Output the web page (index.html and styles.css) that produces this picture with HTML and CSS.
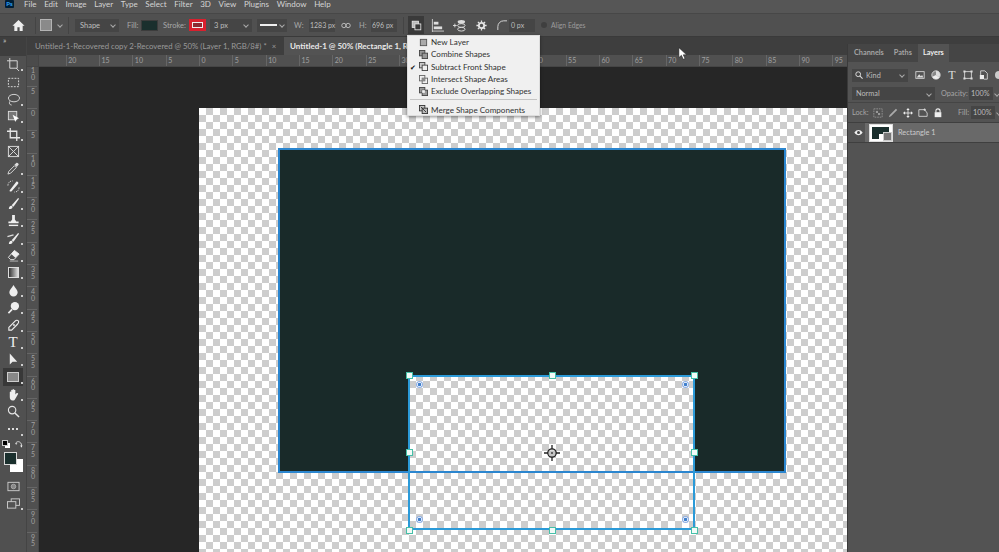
FILE: index.html
```html
<!DOCTYPE html>
<html lang="en">
<head>
<meta charset="utf-8">
<title>Photoshop</title>
<link rel="stylesheet" href="styles.css">
</head>
<body>
<div class="app">
  <header class="menubar">
    <span class="ps-logo">Ps</span>
    <nav class="menu">
      <span>File</span><span>Edit</span><span>Image</span><span>Layer</span><span>Type</span><span>Select</span><span>Filter</span><span>3D</span><span>View</span><span>Plugins</span><span>Window</span><span>Help</span>
    </nav>
  </header>

  <div class="options">
    <svg class="opt-home" viewBox="0 0 14 14"><path d="M7 1 0.5 7.2H2.5V13H5.8V9H8.2V13H11.5V7.2H13.5Z" fill="#eee"/></svg>
    <i class="sep sep-a"></i>
    <span class="tool-preset"></span><i class="chev chev-preset"></i>
    <i class="sep sep-b"></i>
    <span class="field shape-field">Shape<i class="chev"></i></span>
    <span class="lbl fill-lbl">Fill:</span>
    <span class="fill-swatch"></span>
    <span class="lbl stroke-lbl">Stroke:</span>
    <span class="stroke-swatch"><i></i></span>
    <span class="field width-field">3 px<i class="chev"></i></span>
    <span class="field line-field"><i class="line"></i><i class="chev"></i></span>
    <span class="lbl w-lbl">W:</span>
    <span class="field num-field">1283 px</span>
    <svg class="link" viewBox="0 0 12 8"><circle cx="3.5" cy="4" r="2.6" fill="none" stroke="#ccc"/><circle cx="8.5" cy="4" r="2.6" fill="none" stroke="#ccc"/></svg>
    <span class="lbl h-lbl">H:</span>
    <span class="field num-field">696 px</span>
    <i class="sep sep-c"></i>
    <span class="pathops">
      <svg viewBox="0 0 14 14"><rect x="1.5" y="1.5" width="8" height="8" fill="#bbb" stroke="#eee"/><rect x="5" y="5" width="7.5" height="7.5" fill="#3a3a3a" stroke="#eee"/></svg>
    </span>
    <svg class="opt-ic align-ic" viewBox="0 0 14 14"><path d="M1.5 0V14M1.5 13H14" stroke="#ccc" fill="none"/><rect x="3" y="3" width="5" height="3" fill="#ddd"/><rect x="3" y="8" width="9" height="3" fill="#ddd"/></svg>
    <svg class="opt-ic arrange-ic" viewBox="0 0 14 14"><path d="M0 7H4M2 5V9" stroke="#ddd"/><ellipse cx="9" cy="3" rx="4" ry="2" fill="#ddd"/><ellipse cx="9" cy="7" rx="4" ry="2" fill="none" stroke="#ddd"/><ellipse cx="9" cy="11" rx="4" ry="2" fill="none" stroke="#ddd"/></svg>
    <svg class="opt-ic gear-ic" viewBox="0 0 14 14"><circle cx="7" cy="7" r="3.4" fill="none" stroke="#e4e4e4" stroke-width="2.4"/><path d="M7 0.5V3M7 11V13.5M0.5 7H3M11 7H13.5M2.4 2.4 4.2 4.2M9.8 9.8 11.6 11.6M11.6 2.4 9.8 4.2M4.2 9.8 2.4 11.6" stroke="#e4e4e4" stroke-width="1.6"/></svg>
    <svg class="opt-ic corner-ic" viewBox="0 0 12 12"><path d="M1 12V8C1 4 4 1 8 1H12" fill="none" stroke="#ddd" stroke-width="1.1"/></svg>
    <span class="field radius-field">0 px</span>
    <span class="check-dot"></span>
    <span class="lbl edges-lbl">Align Edges</span>
  </div>

  <div class="workspace">
    <aside class="toolbar">
      <div class="collapse">»</div>
      <div class="tool more"><svg viewBox="0 0 14 14"><path d="M3 0V3M0 3H3M3 3H11V11H3Z" fill="none" stroke="#ddd"/><path d="M10 11 13 14" stroke="#ddd"/></svg></div>
      <div class="tool"><svg viewBox="0 0 14 14"><rect x="1.5" y="2.5" width="11" height="9" fill="none" stroke="#ddd" stroke-dasharray="2 1.3"/></svg></div>
      <div class="tool more"><svg viewBox="0 0 14 14"><ellipse cx="7.5" cy="5.5" rx="6" ry="4" fill="none" stroke="#ddd"/><path d="M3 9C2 11 3 13 5 13" fill="none" stroke="#ddd"/></svg></div>
      <div class="tool more"><svg viewBox="0 0 14 14"><rect x="1.5" y="1.5" width="9" height="9" fill="#777" stroke="#ddd"/><path d="M6 5 13 9 10 10 9 13Z" fill="#fff"/></svg></div>
      <div class="tool more"><svg viewBox="0 0 14 14"><path d="M3.5 0V10.5H14M0 3.5H10.5V14" fill="none" stroke="#e6e6e6" stroke-width="1.4"/></svg></div>
      <div class="tool"><svg viewBox="0 0 14 14"><rect x="1.5" y="1.5" width="11" height="11" fill="none" stroke="#ddd"/><path d="M1.5 1.5 12.5 12.5M12.5 1.5 1.5 12.5" stroke="#ddd"/></svg></div>
      <div class="tool more"><svg viewBox="0 0 14 14"><path d="M1 13 2 10 8 4 10 6 4 12Z" fill="none" stroke="#ddd"/><path d="M8 3 10 1C11 0 13 2 12.5 3L10.5 5.5Z" fill="#ddd"/></svg></div>
      <div class="tool more"><svg viewBox="0 0 14 14"><path d="M3 11 10 2C11 1 13 3 12 4L5 12C4 13 2 12 3 11Z" fill="#eee"/><path d="M1 6C1 3 3 1 6 1M13 8C13 11 11 13 8 13" fill="none" stroke="#ddd" stroke-dasharray="1.4 1"/></svg></div>
      <div class="tool more"><svg viewBox="0 0 14 14"><path d="M5 9 12 1 13 2 7 10.5Z" fill="#eee"/><path d="M2 13C2 11 3 9.5 4.5 9.5 6 9.5 6.5 11 5.5 12 4.5 13 3 13 2 13Z" fill="#eee"/></svg></div>
      <div class="tool more"><svg viewBox="0 0 14 14"><path d="M5.5 1H8.5V6L10 8H12.5V10H1.5V8H4L5.5 6Z" fill="#eee"/><rect x="2" y="11.5" width="10" height="1.5" fill="#eee"/></svg></div>
      <div class="tool more"><svg viewBox="0 0 14 14"><path d="M5 9 12 1 13 2 7 10.5Z" fill="#eee"/><path d="M2 13C2 11 3 9.5 4.5 9.5 6 9.5 6.5 11 5.5 12 4.5 13 3 13 2 13Z" fill="#eee"/><path d="M0.5 5 7 3" stroke="#ddd" stroke-width="1.4"/></svg></div>
      <div class="tool more"><svg viewBox="0 0 14 14"><path d="M8 1.5 13 5.5 7.5 11.5H4L1.5 9Z" fill="none" stroke="#eee"/><path d="M8 1.5 13 5.5 9 9.5 4.5 5.5Z" fill="#eee"/><path d="M3 13H12" stroke="#bbb"/></svg></div>
      <div class="tool more"><span class="gradient"></span></div>
      <div class="tool more"><svg viewBox="0 0 14 14"><path d="M7 1C9 4.5 11.5 6.5 11.5 9A4.5 4.5 0 0 1 2.5 9C2.5 6.5 5 4.5 7 1Z" fill="#eee"/></svg></div>
      <div class="tool more"><svg viewBox="0 0 14 14"><circle cx="8.5" cy="5.5" r="4.5" fill="#eee"/><path d="M5.5 9 1.5 13" stroke="#eee" stroke-width="1.8"/></svg></div>
      <div class="tool more"><svg viewBox="0 0 14 14"><path d="M2 10 9 3C10 2 12 2.5 12.5 3.5 13 5 12 6 11 7L5 13H2Z" fill="none" stroke="#eee" stroke-width="1.2"/><circle cx="7.5" cy="7.5" r="1" fill="#eee"/></svg></div>
      <div class="tool more tool-t">T</div>
      <div class="tool more"><svg viewBox="0 0 14 14"><path d="M3 0.5V12.5L6 9.5 11 9.5Z" fill="#eee"/></svg></div>
      <div class="tool more active"><span class="rect-tool"></span></div>
      <div class="tool more"><svg viewBox="0 0 14 14"><path d="M3 8V4.5C3 3.5 4.5 3.5 4.5 4.5V2.5C4.5 1.5 6 1.5 6 2.5V1.8C6 0.8 7.5 0.8 7.5 1.8V2.5C7.5 1.5 9 1.5 9 2.5V7L10.5 5.5C11.5 4.8 12.5 6 11.8 6.8L9 11.5C8.5 12.8 7.5 13.5 6 13.5 4 13.5 3 12 3 10V8Z" fill="#eee"/></svg></div>
      <div class="tool"><svg viewBox="0 0 14 14"><circle cx="5.5" cy="5.5" r="4" fill="none" stroke="#e6e6e6" stroke-width="1.2"/><path d="M8.5 8.5 13 13" stroke="#e6e6e6" stroke-width="1.5"/></svg></div>
      <div class="tool more dots"><i></i><i></i><i></i></div>
      <div class="colors">
        <span class="mini-fg"></span><span class="mini-bg"></span>
        <svg class="swap" viewBox="0 0 10 10"><path d="M1 4C2 1.5 6 1 8 5V9" fill="none" stroke="#eee"/><path d="M0 4H3L1.5 6ZM6.5 7H9.5L8 9.5Z" fill="#eee"/></svg>
        <span class="bg-swatch"></span><span class="fg-swatch"></span>
      </div>
      <div class="tool qmask"><svg viewBox="0 0 14 14"><rect x="1" y="2.5" width="12" height="9" fill="none" stroke="#ccc"/><circle cx="7" cy="7" r="2.5" fill="#888" stroke="#ccc" stroke-width=".6"/></svg></div>
      <div class="tool more"><svg viewBox="0 0 14 14"><rect x="4.5" y="2" width="9" height="7" fill="none" stroke="#ccc"/><rect x="0.5" y="5" width="9" height="7" fill="#535353" stroke="#ccc"/></svg></div>
    </aside>

    <main class="main">
      <div class="tabs">
        <div class="tab"><span class="tab-title">Untitled-1-Recovered copy 2-Recovered @ 50% (Layer 1, RGB/8#) *</span><span class="close">×</span></div>
        <div class="tab tab-active"><span class="tab-title">Untitled-1 @ 50% (Rectangle 1, RGB/8#) *</span></div>
      </div>
      <div class="hruler">
        <span class="corner"></span>
        <div class="hticks">
          <span>20</span><span>15</span><span>10</span><span>5</span><span>0</span><span>5</span><span>10</span><span>15</span><span>20</span><span>25</span><span>30</span><span>35</span><span>40</span><span>45</span><span>50</span><span>55</span><span>60</span><span>65</span><span>70</span><span>75</span><span>80</span><span>85</span><span>90</span><span>95</span>
        </div>
      </div>
      <div class="stage">
        <div class="vruler">
          <div class="vticks">
            <span class="vfirst">10</span><span>5</span><span>0</span><span>5</span><span>10</span><span>15</span><span>20</span><span>25</span><span>30</span><span>35</span><span>40</span><span>45</span><span>50</span><span>55</span><span>60</span><span>65</span><span>70</span><span>75</span><span>80</span><span>85</span><span>90</span><span>95</span>
          </div>
        </div>
        <div class="canvas">
          <div class="doc">
            <div class="shape"></div>
            <div class="cutout"></div>
            <div class="outline"></div>
            <i class="handle h-tl"></i><i class="handle h-tc"></i><i class="handle h-tr"></i>
            <i class="handle h-ml"></i><i class="handle h-mr"></i>
            <i class="handle h-bl"></i><i class="handle h-bc"></i><i class="handle h-br"></i>
            <i class="target t-tl"></i><i class="target t-tr"></i><i class="target t-bl"></i><i class="target t-br"></i>
            <svg class="center" viewBox="0 0 16 16"><circle cx="8" cy="8" r="4.2" fill="#bbb" fill-opacity=".5" stroke="#222" stroke-width="1.3"/><path d="M8 0V4M8 12V16M0 8H4M12 8H16" stroke="#222" stroke-width="1.3"/><circle cx="8" cy="8" r="1" fill="#444"/></svg>
          </div>
        </div>
      </div>
    </main>

    <aside class="panel">
      <div class="panel-tabs">
        <span class="ptab">Channels</span><span class="ptab">Paths</span><span class="ptab ptab-active">Layers</span>
      </div>
      <div class="filter-row">
        <span class="pfield kind"><svg viewBox="0 0 10 10"><circle cx="4" cy="4" r="3" fill="none" stroke="#ddd" stroke-width="1.2"/><path d="M6 6 9.5 9.5" stroke="#ddd" stroke-width="1.3"/></svg>Kind<i class="chev"></i></span>
        <div class="filters">
          <svg viewBox="0 0 12 12"><rect x="1" y="2" width="10" height="8" fill="none" stroke="#ddd"/><path d="M2 9 5 5 7 7.5 8.5 6 10 9Z" fill="#ddd"/></svg>
          <svg viewBox="0 0 12 12"><circle cx="6" cy="6" r="5" fill="#888" stroke="#ddd"/><path d="M6 6 6 1A5 5 0 0 1 10 9Z" fill="#ddd"/><path d="M6 6 1.5 8A5 5 0 0 0 10 9Z" fill="#eee"/></svg>
          <span class="glyph-t">T</span>
          <svg viewBox="0 0 12 12"><rect x="2" y="2" width="8" height="8" fill="none" stroke="#ddd"/><path d="M0.5 0.5H3V3H0.5ZM9 0.5H11.5V3H9ZM0.5 9H3V11.5H0.5ZM9 9H11.5V11.5H9Z" fill="#ddd"/></svg>
          <svg viewBox="0 0 12 12"><path d="M2 6V1H7L10 4V11H6" fill="none" stroke="#ddd"/><rect x="1" y="6" width="5" height="5" fill="#eee"/></svg>
          <span class="filter-dot"></span>
        </div>
      </div>
      <div class="blend-row">
        <span class="pfield normal">Normal<i class="chev"></i></span>
        <span class="plbl">Opacity:</span>
        <span class="pfield pct">100%</span><i class="chev pct-chev"></i>
      </div>
      <div class="lock-row">
        <span class="plbl">Lock:</span>
        <svg viewBox="0 0 12 12"><rect x="1" y="1" width="10" height="10" fill="none" stroke="#999" stroke-dasharray="2 1"/><rect x="3.5" y="3.5" width="2.5" height="2.5" fill="#999"/><rect x="6" y="6" width="2.5" height="2.5" fill="#999"/></svg>
        <svg viewBox="0 0 12 12"><path d="M1 11 2 8.5 9.5 1 11 2.5 3.5 10Z" fill="#aaa"/></svg>
        <svg viewBox="0 0 12 12"><path d="M6 0 8 2.5H4ZM6 12 4 9.5H8ZM0 6 2.5 4V8ZM12 6 9.5 8V4Z" fill="#eee"/><path d="M6 2V10M2 6H10" stroke="#eee"/></svg>
        <svg viewBox="0 0 12 12"><path d="M1 2H8L11 6V10H1Z" fill="none" stroke="#ddd"/><path d="M8 0.5V3.5M6.5 2H9.5" stroke="#ddd"/></svg>
        <svg viewBox="0 0 12 12"><path d="M3.5 5V3.5A2.5 2.5 0 0 1 8.5 3.5V5" fill="none" stroke="#eee" stroke-width="1.3"/><rect x="2" y="5" width="8" height="6" fill="#eee"/></svg>
        <span class="plbl fill-plbl">Fill:</span>
        <span class="pfield pct">100%</span><i class="chev pct-chev"></i>
      </div>
      <div class="layer-row">
        <span class="eye-cell"><svg viewBox="0 0 12 8"><path d="M0.5 4C2 1.5 4 0.5 6 0.5S10 1.5 11.5 4C10 6.5 8 7.5 6 7.5S2 6.5 0.5 4Z" fill="#eee"/><circle cx="6" cy="4" r="2" fill="#444"/></svg></span>
        <span class="layer-main">
          <span class="thumb"><i class="thumb-dark"></i><i class="thumb-hole"></i><i class="thumb-mask"></i></span>
          <span class="layer-name">Rectangle 1</span>
        </span>
      </div>
    </aside>
  </div>

  <div class="dropdown">
    <div class="dd-item"><svg viewBox="0 0 10 10"><rect x="1.5" y="1.5" width="7" height="7" fill="#aaa" stroke="#555"/></svg>New Layer</div>
    <div class="dd-item"><svg viewBox="0 0 10 10"><rect x="0.5" y="0.5" width="6" height="6" fill="#999" stroke="#444"/><rect x="3.5" y="3.5" width="6" height="6" fill="#999" stroke="#444"/></svg>Combine Shapes</div>
    <div class="dd-item"><span class="tick">✔</span><svg viewBox="0 0 10 10"><rect x="0.5" y="0.5" width="6" height="6" fill="#ccc" stroke="#444"/><rect x="3.5" y="3.5" width="6" height="6" fill="#f0f0f0" stroke="#444"/></svg>Subtract Front Shape</div>
    <div class="dd-item"><svg viewBox="0 0 10 10"><rect x="0.5" y="0.5" width="6" height="6" fill="none" stroke="#666"/><rect x="3.5" y="3.5" width="6" height="6" fill="none" stroke="#666"/><rect x="3.5" y="3.5" width="3" height="3" fill="#888"/></svg>Intersect Shape Areas</div>
    <div class="dd-item"><svg viewBox="0 0 10 10"><rect x="0.5" y="0.5" width="6" height="6" fill="#999" stroke="#444"/><rect x="3.5" y="3.5" width="6" height="6" fill="#999" stroke="#444"/><rect x="3.5" y="3.5" width="3" height="3" fill="#f0f0f0"/></svg>Exclude Overlapping Shapes</div>
    <div class="dd-sep"></div>
    <div class="dd-item"><svg viewBox="0 0 10 10"><rect x="0.5" y="0.5" width="6" height="6" fill="#ccc" stroke="#333"/><rect x="3.5" y="3.5" width="6" height="6" fill="#bbb" stroke="#333"/><path d="M2 2 8 8" stroke="#333"/></svg>Merge Shape Components</div>
  </div>

  <svg class="cursor" viewBox="0 0 10 14"><path d="M1 0.5V11.5L3.8 9 5.8 13.5 7.8 12.5 5.8 8.5H9.5Z" fill="#fff" stroke="#222" stroke-width=".6"/></svg>
</div>
</body>
</html>
```
FILE: styles.css
```css
* { box-sizing: border-box; }
html, body { margin: 0; padding: 0; background: #535353; }
i { display: block; font-style: normal; }
svg { display: block; flex: none; }

.app {
  position: relative;
  width: 999px;
  height: 552px;
  overflow: hidden;
  display: flex;
  flex-direction: column;
  font-family: Lato, "Liberation Sans", sans-serif;
  font-size: 8px;
  color: #c8c8c8;
  background: #535353;
}

/* menu bar */
.menubar { height: 13px; flex: none; display: flex; align-items: flex-start; background: #565656; }
.ps-logo {
  width: 9px; height: 8px; margin-left: 5px;
  background: #001e36; color: #31a8ff; border-radius: 1px;
  font-size: 6px; font-weight: 700; line-height: 8px; text-align: center;
}
.menu { display: flex; gap: 7.6px; margin-left: 10px; font-size: 8px; color: #d4d4d4; line-height: 8px; }

/* options bar */
.options {
  height: 24px; flex: none; display: flex; align-items: center;
  background: #505050;
  border-top: 1px solid #474747;
  border-bottom: 1px solid #3a3a3a;
  padding-left: 12px;
}
.opt-home { width: 13px; height: 13px; }
.sep { width: 1px; height: 17px; background: #444; }
.sep-a { margin-left: 10px; }
.tool-preset { width: 12px; height: 12px; margin-left: 4px; background: #8a8a8a; border: 1px solid #b4b4b4; }
.chev { width: 4px; height: 4px; border-right: 1px solid #aaa; border-bottom: 1px solid #aaa; transform: rotate(45deg); flex: none; }
.chev-preset { margin-left: 6px; }
.sep-b { margin-left: 6px; }
.field {
  height: 13px; display: flex; align-items: center; justify-content: space-between;
  background: #454545; padding: 0 4px; color: #bdbdbd; font-size: 7.5px; white-space: nowrap; flex: none;
}
.shape-field { width: 44px; margin-left: 6px; padding-left: 5px; }
.lbl { font-size: 7.5px; color: #a8a8a8; white-space: nowrap; flex: none; }
.fill-lbl { width: 14px; margin-left: 8px; }
.fill-swatch { width: 17px; height: 11px; background: #1a2f2d; border: 1px solid #3c3c3c; }
.stroke-lbl { width: 26px; margin-left: 5px; }
.stroke-swatch { width: 17px; height: 12px; background: #d9202e; display: flex; align-items: center; justify-content: center; }
.stroke-swatch i { width: 11px; height: 6px; border: 1px solid #eee; background: #8c2a33; }
.width-field { width: 42px; margin-left: 4px; }
.line-field { width: 30px; margin-left: 5px; padding: 0 3px; }
.line { width: 17px; height: 1.5px; background: #eee; }
.w-lbl { width: 10px; margin-left: 7px; }
.num-field { width: 26px; margin-left: 5px; padding: 0 1px; font-size: 7px; }
.link { width: 10px; height: 7px; margin-left: 6px; }
.h-lbl { width: 7px; margin-left: 8px; }
.sep-c { margin-left: 6px; }
.pathops { width: 16px; height: 18px; margin-left: 4px; background: #3a3a3a; display: flex; align-items: center; justify-content: center; }
.pathops svg { width: 11px; height: 11px; }
.opt-ic { width: 13px; height: 13px; }
.align-ic { margin-left: 7px; }
.arrange-ic { margin-left: 9px; }
.gear-ic { width: 11px; height: 11px; margin-left: 10px; }
.corner-ic { width: 10px; height: 10px; margin-left: 10px; }
.radius-field { width: 26px; margin-left: 2px; padding: 0 2px; font-size: 7px; }
.check-dot { width: 6px; height: 6px; margin-left: 6px; border-radius: 50%; background: #3f3f3f; }
.edges-lbl { margin-left: 4px; color: #9c9c9c; font-size: 6.8px; }

/* workspace */
.workspace { flex: 1; display: flex; min-height: 0; background: #3e3e3e; }

/* toolbar */
.toolbar { width: 27px; flex: none; background: #505050; border-right: 1px solid #444; display: flex; flex-direction: column; align-items: center; }
.collapse { height: 19px; width: 100%; padding-left: 3px; color: #ccc; font-size: 8px; line-height: 7px; background: #3e3e3e; }
.tool { position: relative; width: 20px; height: 17.35px; flex: none; display: flex; align-items: center; justify-content: center; color: #eee; }
.tool svg { width: 13px; height: 13px; }
.tool.more::after { content: ""; position: absolute; right: 0; bottom: 2px; width: 2px; height: 2px; background: #ccc; }
.gradient { width: 11px; height: 11px; border: 1px solid #ddd; background: linear-gradient(90deg, #333, #ddd); }
.tool-t { font-family: "Liberation Serif", serif; font-size: 15px; line-height: 16px; }
.active { background: #383838; }
.rect-tool { width: 12px; height: 10px; border: 1px solid #ccc; background: #888; }
.dots { gap: 2px; }
.dots i { width: 2px; height: 2px; background: #ddd; }
.colors { position: relative; width: 27px; height: 39px; flex: none; }
.mini-bg { position: absolute; left: 5px; top: 5px; width: 5px; height: 5px; background: #fff; }
.mini-fg { position: absolute; left: 2px; top: 2px; width: 6px; height: 6px; background: #000; border: 1px solid #ccc; z-index: 1; }
.swap { position: absolute; left: 15px; top: 2px; width: 8px; height: 8px; }
.bg-swatch { position: absolute; left: 10px; top: 21px; width: 13px; height: 13px; background: #fff; }
.fg-swatch { position: absolute; left: 4px; top: 14px; width: 13px; height: 13px; background: #1a2f2d; border: 1px solid #d8d8d8; }
.qmask { margin-top: 1px; }

/* main */
.main { width: 820px; flex: none; display: flex; flex-direction: column; min-height: 0; }
.tabs { height: 18px; flex: none; display: flex; background: #3e3e3e; overflow: hidden; }
.tab { width: 257px; flex: none; padding-left: 8px; line-height: 18px; font-size: 7.8px; color: #9a9a9a; white-space: nowrap; display: flex; }
.close { margin-left: 5px; }
.tab-active { width: 216px; background: #535353; color: #e8e8e8; padding-left: 6px; font-size: 8px; font-weight: 700; }

.hruler { height: 12px; flex: none; display: flex; background: #505050; border-bottom: 1px solid #454545; overflow: hidden; }
.corner { width: 12px; flex: none; background: #4b4b4b; border-right: 1px solid #454545; }
.hticks { display: flex; padding-left: 26.7px; }
.hticks span { width: 33.33px; flex: none; border-left: 1px solid #666; padding-left: 1.5px; font-size: 7px; line-height: 11px; color: #a0a0a0; }

.stage { flex: 1; display: flex; min-height: 0; }
.vruler { width: 12px; flex: none; background: #505050; border-right: 1px solid #454545; overflow: hidden; }
.vticks span { display: block; height: 22.3px; border-top: 1px solid #666; padding: 1px 0 0 4px; font-size: 7px; line-height: 6.5px; color: #a0a0a0; word-break: break-all; width: 10px; }
.vticks .vfirst { height: 18.7px; border-top: 0; padding-top: 0; }
.canvas { position: relative; flex: 1; background: #262626; overflow: hidden; }

/* document, placed on the free canvas */
.doc {
  position: absolute; left: 160px; top: 41px; width: 648px; height: 444px;
  background: repeating-conic-gradient(#cdcdcd 0 25%, #fff 0 50%) 0 0 / 14px 14px;
}
.shape { position: absolute; left: 79px; top: 40px; width: 508px; height: 325px; background: #192a29; border: 2px solid #2b86cf; }
.cutout {
  position: absolute; left: 210px; top: 268px; width: 285px; height: 95px;
  background: repeating-conic-gradient(#cdcdcd 0 25%, #fff 0 50%) 0 -2px / 14px 14px;
}
.outline { position: absolute; left: 209px; top: 267px; width: 287px; height: 155px; border: 2px solid #2b9ad8; }
.handle { position: absolute; width: 7px; height: 7px; background: #f2fbf8; border: 1px solid #45c0a8; }
.h-tl { left: 207px; top: 264px; } .h-tc { left: 350px; top: 264px; } .h-tr { left: 492px; top: 264px; }
.h-ml { left: 207px; top: 341px; } .h-mr { left: 492px; top: 341px; }
.h-bl { left: 207px; top: 419px; } .h-bc { left: 350px; top: 419px; } .h-br { left: 492px; top: 419px; }
.target { position: absolute; width: 7px; height: 7px; border-radius: 50%; background: radial-gradient(circle, #3f7fcc 0 1.4px, #dbe6f6 1.6px 2.4px, #8fb0e4 2.6px); }
.t-tl { left: 217px; top: 273px; } .t-tr { left: 483px; top: 273px; }
.t-bl { left: 217px; top: 408px; } .t-br { left: 483px; top: 408px; }
.center { position: absolute; left: 345px; top: 337px; width: 16px; height: 16px; }

/* panel */
.panel { flex: 1; min-width: 0; background: #535353; margin-top: 7px; border-left: 1px solid #3a3a3a; display: flex; flex-direction: column; overflow: hidden; }
.panel-tabs { height: 18px; flex: none; display: flex; background: #454545; padding-left: 1px; }
.ptab { padding: 0 5px; line-height: 18px; font-size: 7.3px; font-weight: 700; color: #a4a4a4; }
.ptab-active { background: #535353; color: #eee; margin-left: 1px; }
.filter-row { height: 22px; flex: none; display: flex; align-items: center; padding: 4px 0 0 4px; }
.pfield { height: 13px; display: flex; align-items: center; background: #454545; color: #bcbcbc; font-size: 7.3px; padding: 0 2px; flex: none; white-space: nowrap; }
.kind { width: 56px; padding-left: 3px; gap: 3px; }
.kind svg { width: 8px; height: 8px; }
.kind .chev { margin-left: auto; margin-right: 2px; }
.filters { display: flex; align-items: center; gap: 6px; margin-left: 7px; }
.filters svg { width: 10px; height: 10px; }
.glyph-t { width: 10px; text-align: center; font-family: "Liberation Serif", serif; font-size: 12px; line-height: 12px; color: #ddd; }
.filter-dot { width: 8px; height: 8px; border-radius: 50%; background: #ccc; flex: none; }
.blend-row { height: 19px; flex: none; display: flex; align-items: center; padding: 1px 0 0 4px; border-bottom: 1px solid #454545; }
.normal { width: 83px; padding: 0 4px; justify-content: space-between; }
.plbl { font-size: 7.3px; color: #a6a6a6; flex: none; }
.blend-row .plbl { margin-left: 6px; width: 28px; }
.pct { width: 24px; }
.pct-chev { margin-left: 2px; }
.lock-row { height: 20px; flex: none; display: flex; align-items: center; padding-left: 4px; border-bottom: 1px solid #3f3f3f; }
.lock-row svg { width: 10px; height: 10px; margin-left: 5px; }
.lock-row .plbl { width: 19px; margin-right: -3px; }
.lock-row .fill-plbl { width: 13px; margin: 0 0 0 15px; }
.layer-row { height: 20px; flex: none; display: flex; border-bottom: 1px solid #3f3f3f; }
.eye-cell { width: 17px; flex: none; display: flex; align-items: center; justify-content: center; background: #535353; padding-left: 3px; }
.eye-cell svg { width: 9px; height: 7px; }
.layer-main { flex: 1; display: flex; align-items: center; background: #696969; gap: 5px; padding-left: 4px; }
.thumb { position: relative; width: 24px; height: 18px; flex: none; background: #fff; border: 1px solid #ddd; }
.thumb-dark { position: absolute; left: 2px; top: 2px; width: 17px; height: 12px; background: #1a2f2d; }
.thumb-hole { position: absolute; left: 9px; top: 9px; width: 9px; height: 5px; background: #fff; }
.thumb-mask { position: absolute; right: 0; bottom: 0; width: 9px; height: 9px; background: #777; border: 1px solid #ccc; }
.layer-name { font-size: 7.3px; color: #ccc; }

/* dropdown */
.dropdown {
  position: absolute; left: 407px; top: 35px; width: 133px; height: 81px;
  background: #f0f0f0; border: 1px solid #ddd;
  box-shadow: 0 1px 3px rgba(0, 0, 0, .45);
  color: #333; font-size: 8.1px;
}
.dd-item { position: relative; height: 12.3px; display: flex; align-items: center; padding-left: 11px; line-height: 12px; white-space: nowrap; }
.dd-item svg { width: 9px; height: 9px; margin-right: 3px; }
.tick { position: absolute; left: 2px; top: 0; font-size: 7px; color: #111; }
.dd-sep { height: 1px; margin: 2px 2px 3px; background: #c4c4c4; }

.cursor { position: absolute; left: 678px; top: 47px; width: 9px; height: 13px; }
```
